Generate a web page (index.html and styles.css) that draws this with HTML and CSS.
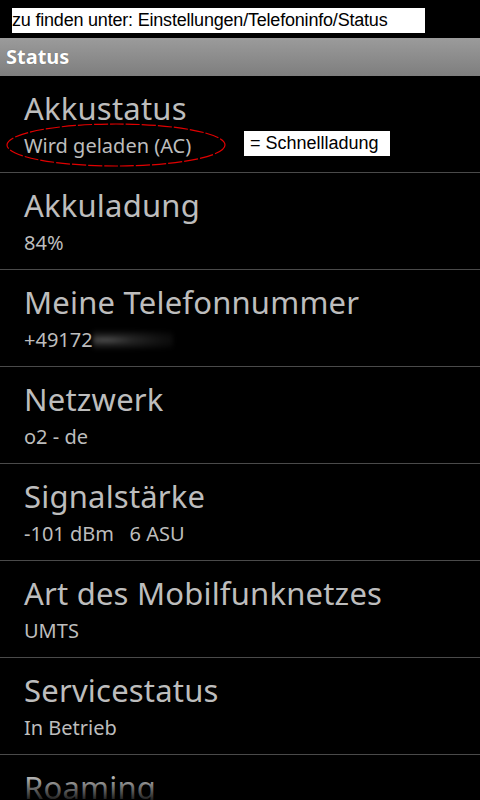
FILE: index.html
```html
<!DOCTYPE html>
<html lang="de">
<head>
<meta charset="utf-8">
<link rel="stylesheet" href="styles.css">
</head>
<body>
<div class="screen">
  <div class="topnote"><span class="note">zu finden unter: Einstellungen/Telefoninfo/Status</span></div>
  <div class="titlebar">Status</div>
  <ul class="list">
    <li class="row">
      <div class="title">Akkustatus</div>
      <div class="sub">Wird geladen (AC)</div>
      <svg class="ellipse" width="222" height="46" viewBox="0 0 222 46"><ellipse cx="111" cy="23" rx="109" ry="21" fill="none" stroke="#e00000" stroke-width="1.2" stroke-dasharray="14 2"/></svg>
      <span class="callout">= Schnellladung</span>
    </li>
    <li class="row">
      <div class="title">Akkuladung</div>
      <div class="sub">84%</div>
    </li>
    <li class="row">
      <div class="title">Meine Telefonnummer</div>
      <div class="sub">+49172<span class="blur"></span></div>
    </li>
    <li class="row">
      <div class="title">Netzwerk</div>
      <div class="sub">o2 - de</div>
    </li>
    <li class="row">
      <div class="title">Signalstärke</div>
      <div class="sub">-101 dBm&nbsp;&nbsp; 6 ASU</div>
    </li>
    <li class="row">
      <div class="title">Art des Mobilfunknetzes</div>
      <div class="sub">UMTS</div>
    </li>
    <li class="row">
      <div class="title">Servicestatus</div>
      <div class="sub">In Betrieb</div>
    </li>
    <li class="row">
      <div class="title">Roaming</div>
      <div class="sub">Kein Roaming</div>
    </li>
  </ul>
  <div class="fade"></div>
</div>
</body>
</html>
```
FILE: styles.css
```css
* { box-sizing: border-box; }
html, body { margin: 0; padding: 0; background: #000; }
.screen {
  width: 480px;
  height: 800px;
  overflow: hidden;
  position: relative;
  background: #000;
  font-family: "Noto Sans", "Open Sans", sans-serif;
}
.topnote {
  height: 38px;
  padding: 8px 0 0 12px;
}
.note {
  display: block;
  width: 413px;
  height: 25px;
  background: #fff;
  color: #000;
  font-family: "Liberation Sans", Arial, sans-serif;
  font-size: 18px;
  line-height: 25px;
  white-space: nowrap;
  letter-spacing: -0.2px;
}
.titlebar {
  height: 38px;
  background: linear-gradient(#9b9b9b, #7e7e7e);
  color: #fff;
  font-weight: bold;
  font-size: 20px;
  line-height: 38px;
  padding-left: 6px;
  text-shadow: 0 0 1px rgba(0,0,0,0.4);
}
.list {
  list-style: none;
  margin: 0;
  padding: 0;
}
.row {
  position: relative;
  height: 97px;
  padding: 13px 0 0 24px;
  border-bottom: 1px solid #4a4a4a;
}
.title {
  font-size: 31px;
  line-height: 38px;
  color: #bdbdbd;
  white-space: nowrap;
  letter-spacing: 0.2px;
}
.sub {
  margin-top: 5px;
  font-size: 20px;
  line-height: 28px;
  color: #bdbdbd;
  white-space: nowrap;
}
.blur {
  display: inline-block;
  width: 80px;
  height: 18px;
  vertical-align: -2px;
  background: radial-gradient(ellipse at 15% 50%, #555 0%, rgba(60,60,60,0.6) 30%, rgba(40,40,40,0.4) 60%, rgba(0,0,0,0) 100%);
  filter: blur(2px);
}
.ellipse {
  position: absolute;
  left: 5px;
  top: 46px;
}
.callout {
  position: absolute;
  left: 244px;
  top: 55px;
  width: 146px;
  height: 25px;
  background: #fff;
  color: #000;
  font-family: "Liberation Sans", Arial, sans-serif;
  font-size: 18px;
  line-height: 25px;
  padding-left: 6px;
}
.fade {
  position: absolute;
  left: 0;
  right: 0;
  bottom: 0;
  height: 24px;
  background: linear-gradient(rgba(0,0,0,0), rgba(0,0,0,0.85));
}
```
